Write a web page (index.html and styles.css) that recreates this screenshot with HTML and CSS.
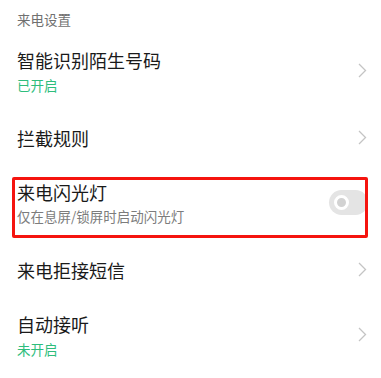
FILE: index.html
```html
<!DOCTYPE html>
<html lang="zh-CN">
<head>
<meta charset="utf-8">
<link rel="stylesheet" href="styles.css">
</head>
<body>
<div class="page">
  <div class="section-title">来电设置</div>
  <div class="row row-1">
    <div class="text">
      <div class="title">智能识别陌生号码</div>
      <div class="sub on">已开启</div>
    </div>
    <svg class="chev" width="9" height="15" viewBox="0 0 9 15"><path d="M1 1 L7.5 7.5 L1 14" fill="none" stroke="#c4c4c4" stroke-width="1.3"/></svg>
  </div>
  <div class="row row-2">
    <div class="text">
      <div class="title">拦截规则</div>
    </div>
    <svg class="chev" width="9" height="15" viewBox="0 0 9 15"><path d="M1 1 L7.5 7.5 L1 14" fill="none" stroke="#c4c4c4" stroke-width="1.3"/></svg>
  </div>
  <div class="row row-3 highlight">
    <div class="text">
      <div class="title">来电闪光灯</div>
      <div class="sub desc">仅在息屏/锁屏时启动闪光灯</div>
    </div>
    <div class="toggle"><span class="knob"></span></div>
  </div>
  <div class="row row-4">
    <div class="text">
      <div class="title">来电拒接短信</div>
    </div>
    <svg class="chev" width="9" height="15" viewBox="0 0 9 15"><path d="M1 1 L7.5 7.5 L1 14" fill="none" stroke="#c4c4c4" stroke-width="1.3"/></svg>
  </div>
  <div class="row row-5">
    <div class="text">
      <div class="title">自动接听</div>
      <div class="sub on">未开启</div>
    </div>
    <svg class="chev" width="9" height="15" viewBox="0 0 9 15"><path d="M1 1 L7.5 7.5 L1 14" fill="none" stroke="#c4c4c4" stroke-width="1.3"/></svg>
  </div>
</div>
</body>
</html>
```
FILE: styles.css
```css
html, body {
  margin: 0;
  padding: 0;
  background: #ffffff;
}
body {
  font-family: "Noto Sans CJK SC", "Noto Sans", sans-serif;
  color: #1a1a1a;
}
.page {
  width: 381px;
  height: 378px;
  overflow: hidden;
}
.section-title {
  height: 40px;
  box-sizing: border-box;
  padding: 9px 0 0 17px;
  font-size: 13.5px;
  line-height: 20px;
  color: #707070;
}
.row {
  display: flex;
  align-items: center;
  justify-content: space-between;
  padding: 0 14px 0 17px;
  box-sizing: border-box;
  position: relative;
}
.row-1 { height: 66px; }
.row-2 { height: 64px; }
.row-3 { height: 68px; }
.row-4 { height: 64px; }
.row-5 { height: 70px; }
.title {
  font-size: 18px;
  line-height: 24px;
  color: #1a1a1a;
}
.sub {
  font-size: 13.5px;
  line-height: 26px;
}
.sub.on {
  color: #2ebd7c;
}
.sub.desc {
  color: #7c7c7c;
  line-height: 24px;
}
.chev {
  display: block;
  margin-bottom: 5px;
}
.row-2 .chev, .row-4 .chev { margin-bottom: 2px; }
.toggle {
  width: 39px;
  height: 25px;
  border-radius: 12.5px;
  background: #e4e4e4;
  margin-right: -1px;
  margin-bottom: 4px;
  position: relative;
}
.knob {
  position: absolute;
  left: 5px;
  top: 5px;
  width: 15px;
  height: 15px;
  box-sizing: border-box;
  border-radius: 50%;
  border: 3.5px solid #ffffff;
  background: #d2d2d2;
}
.highlight::after {
  content: "";
  position: absolute;
  left: 12px;
  right: 13px;
  top: 7px;
  bottom: 0;
  border: 3px solid #f5140f;
  border-radius: 2px;
  pointer-events: none;
}
```
